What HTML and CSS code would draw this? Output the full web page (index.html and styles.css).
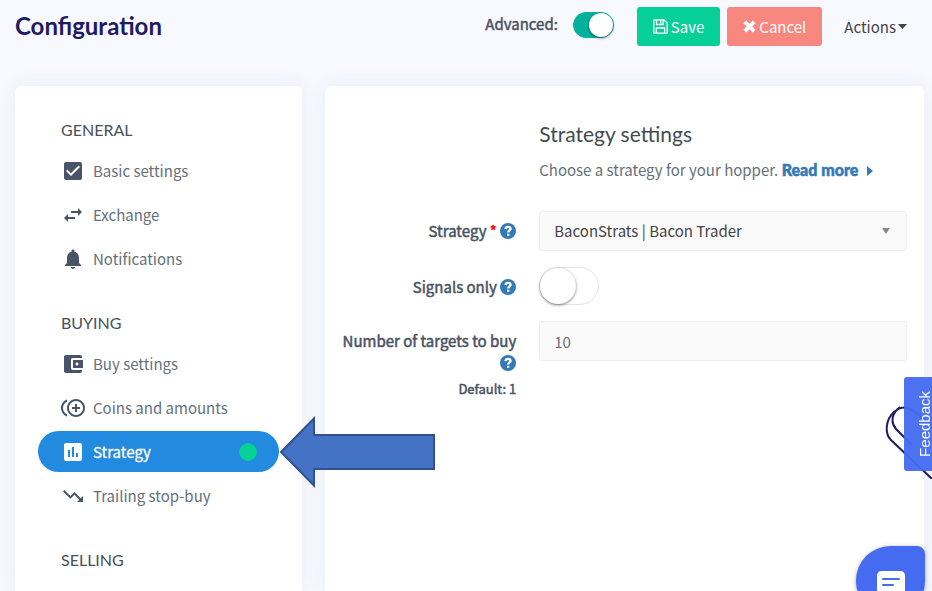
FILE: index.html
```html
<!DOCTYPE html>
<html lang="en">
<head>
<meta charset="utf-8">
<meta name="viewport" content="width=device-width, initial-scale=1">
<title>Configuration</title>
<link rel="stylesheet" href="styles.css">
</head>
<body>
<div class="page">
  <header class="topbar">
    <h1 class="title">Configuration</h1>
    <div class="actions">
      <label class="advanced" for="advanced">Advanced:</label>
      <input class="switch switch-small" type="checkbox" id="advanced" checked>
      <button class="btn btn-save" type="button">
        <svg width="15" height="15" viewBox="0 0 15 15" fill="none" stroke="currentColor" stroke-width="1.3"><path d="M.8 1.3Q.8.8 1.3.8H11L14.2 4V13.7Q14.2 14.2 13.7 14.2H1.3Q.8 14.2.8 13.7ZM3.5.8V5.5H10.2V.8M7.7 1.5V4.5M3.3 14V9H11.7V14"/></svg>Save</button>
      <button class="btn btn-cancel" type="button">
        <svg width="13" height="13" viewBox="0 0 13 13" fill="none" stroke="currentColor" stroke-width="4"><path d="M1.8 1.8 11.2 11.2M11.2 1.8 1.8 11.2"/></svg>Cancel</button>
      <button class="menu" type="button">Actions<svg width="9" height="5" viewBox="0 0 9 5" fill="currentColor"><path d="M0 0H9L4.5 5Z"/></svg></button>
    </div>
  </header>
  <div class="columns">
    <nav class="card sidebar">
      <section class="group">
        <h2 class="group-title">GENERAL</h2>
        <a class="item" href="#"><svg class="icon" viewBox="0 0 24 24"><path d="M19 3H5a2 2 0 0 0-2 2v14a2 2 0 0 0 2 2h14a2 2 0 0 0 2-2V5a2 2 0 0 0-2-2zm-9 14-5-5 1.41-1.41L10 14.17l7.59-7.59L19 8l-9 9z"/></svg>Basic settings</a>
        <a class="item" href="#"><svg class="icon" viewBox="0 0 24 24"><path d="M6.99 11 3 15l3.99 4v-3H14v-2H6.99v-3zM21 9l-3.99-4v3H10v2h7.01v3L21 9z"/></svg>Exchange</a>
        <a class="item" href="#"><svg class="icon" viewBox="0 0 24 24"><path d="M12 22c1.100 0 2-.9 2-2h-4c0 1.100.9 2 2 2zm6-6v-5c0-3.070-1.630-5.640-4.500-6.320V4c0-.83-.67-1.500-1.500-1.500s-1.500.67-1.500 1.500v.68C7.640 5.360 6 7.920 6 11v5l-2 2v1h16v-1l-2-2z"/></svg>Notifications</a>
      </section>
      <section class="group">
        <h2 class="group-title">BUYING</h2>
        <a class="item" href="#"><svg class="icon" viewBox="0 0 24 24"><path d="M21 18v1c0 1.100-.9 2-2 2H5c-1.110 0-2-.9-2-2V5c0-1.100.89-2 2-2h14c1.100 0 2 .9 2 2v1h-9c-1.110 0-2 .9-2 2v8c0 1.100.89 2 2 2h9zm-9-2h10V8H12v8zm4-2.500c-.83 0-1.500-.67-1.500-1.500s.67-1.500 1.500-1.500 1.500.67 1.500 1.500-.67 1.500-1.500 1.500z"/></svg>Buy settings</a>
        <a class="item" href="#"><svg class="icon" viewBox="0 0 24 24"><path d="M16 8h-2v3h-3v2h3v3h2v-3h3v-2h-3V8zM2 12c0-2.790 1.640-5.200 4.010-6.320V3.520C2.520 4.760 0 8.090 0 12s2.520 7.240 5.990 8.480v-2.160C3.640 17.200 2 14.790 2 12zm13-9c-4.960 0-9 4.040-9 9s4.040 9 9 9 9-4.040 9-9-4.040-9-9-9zm0 16c-3.860 0-7-3.140-7-7s3.140-7 7-7 7 3.140 7 7-3.140 7-7 7z"/></svg>Coins and amounts</a>
        <a class="item item-active" href="#" aria-current="page"><svg class="icon" viewBox="0 0 24 24"><path d="M19 3H5a2 2 0 0 0-2 2v14a2 2 0 0 0 2 2h14a2 2 0 0 0 2-2V5a2 2 0 0 0-2-2zM9 17H7v-7h2v7zm4 0h-2V7h2v10zm4 0h-2v-4h2v4z"/></svg>Strategy<span class="dot"></span></a>
        <a class="item" href="#"><svg class="icon" viewBox="0 0 24 24"><path d="m16 18 2.290-2.290-4.880-4.880-4 4L2 7.410 3.410 6l6 6 4-4 6.300 6.290L22 12v6z"/></svg>Trailing stop-buy</a>
      </section>
      <section class="group">
        <h2 class="group-title">SELLING</h2>
      </section>
    </nav>
    <main class="card main">
      <form class="form">
        <div class="intro">
          <h2 class="form-title">Strategy settings</h2>
          <p class="lead">Choose a strategy for your hopper. <a class="more" href="#">Read more<svg width="6" height="10" viewBox="0 0 6 10" fill="currentColor"><path d="M0 0 6 5 0 10Z"/></svg></a></p>
        </div>
        <div class="label"><label for="strategy">Strategy <span class="required">*</span></label> <svg class="help" viewBox="0 0 16 16"><circle cx="8" cy="8" r="8" fill="currentColor"/><path d="M5.500 6.200C5.700 4.500 6.800 3.900 8 3.900c1.500 0 2.500.8 2.500 2 0 1.500-2.300 1.600-2.300 3.500M8.200 10.800v2" fill="none" stroke="#fff" stroke-width="2.4"/></svg></div>
        <select class="field select" id="strategy"><option>BaconStrats | Bacon Trader</option></select>
        <div class="label"><label for="signals">Signals only</label> <svg class="help" viewBox="0 0 16 16"><circle cx="8" cy="8" r="8" fill="currentColor"/><path d="M5.500 6.200C5.700 4.500 6.800 3.900 8 3.900c1.500 0 2.500.8 2.500 2 0 1.500-2.300 1.600-2.300 3.500M8.200 10.800v2" fill="none" stroke="#fff" stroke-width="2.4"/></svg></div>
        <input class="switch switch-large" type="checkbox" id="signals">
        <div class="label"><label for="targets">Number of targets to buy</label> <svg class="help" viewBox="0 0 16 16"><circle cx="8" cy="8" r="8" fill="currentColor"/><path d="M5.500 6.200C5.700 4.500 6.800 3.900 8 3.900c1.500 0 2.500.8 2.500 2 0 1.500-2.300 1.600-2.300 3.500M8.200 10.800v2" fill="none" stroke="#fff" stroke-width="2.4"/></svg><small class="default">Default: 1</small></div>
        <input class="field" type="text" id="targets" value="10">
      </form>
    </main>
  </div>
</div>
<svg class="pointer" width="156" height="72" viewBox="0 0 156 72"><path d="M2 36 35 2.500V19H155V53H35V69.500Z" fill="#4472c4" stroke="#2f528f" stroke-width="2"/></svg>
<svg class="deco" width="50" height="76" viewBox="0 0 50 76" fill="none" stroke="#1f1b63" stroke-width="2"><path d="M50 76 9 37C2 30 4 16 12 9 18 4 24 3 30 7L50 22M30 42 14 26C8 19 10 10 18 4"/></svg>
<button class="feedback" type="button">Feedback</button>
<button class="chat" type="button" aria-label="Chat"><svg width="28" height="28" viewBox="0 0 28 28"><path d="M5 0H23Q28 0 28 5V28L21 23H5Q0 23 0 18V5Q0 0 5 0Z" fill="#fff"/><path d="M6 8H22M6 14H16" stroke="#456cf0" stroke-width="2" stroke-linecap="round"/></svg></button>
</body>
</html>
```
FILE: styles.css
```css
* { box-sizing: border-box; }
body {
  margin: 0;
  background: #f8f9ff;
  color: #495363;
  font: 15px/22px "Noto Sans CJK JP", "Noto Sans", sans-serif;
}
h1, h2, p { margin: 0; }
a { text-decoration: none; }
button { border: 0; font: inherit; cursor: pointer; }
.page { display: flex; flex-direction: column; min-height: 100vh; padding: 0 8px 0 15px; }
.topbar { display: flex; justify-content: space-between; height: 86px; padding-top: 7px; }
.title { font: 700 24px/38px Lato, sans-serif; color: #1f1b63; }
.actions { display: flex; align-items: flex-start; }
.advanced { -webkit-text-stroke: 0.5px; line-height: 34px; margin-right: 15px; }
.switch { appearance: none; margin: 0; border: 1px solid #e4e4e4; border-radius: 20px; background: #fff; display: flex; cursor: pointer; }
.switch::before { content: ""; height: 100%; aspect-ratio: 1; border-radius: 50%; background: #fff; box-shadow: 0 1px 3px rgba(0, 0, 0, .5); }
.switch:checked { justify-content: flex-end; background: #00b19d; border-color: #00b19d; }
.switch-small { width: 41px; height: 26px; margin: 5px 23px 0 0; }
.switch-large { width: 60px; height: 38px; }
.btn { display: flex; align-items: center; justify-content: center; gap: 3px; height: 39px; padding: 0 16px; margin-right: 7px; border-radius: 3px; color: #fff; }
.btn-save { background: #06cf98; }
.btn-cancel { background: #f8877f; }
.menu { display: flex; align-items: center; gap: 2px; height: 39px; margin: 0 17px 0 15px; padding: 0; background: none; color: #444; }
.columns { flex: 1; display: grid; grid-template-columns: minmax(0, 12fr) minmax(0, 25fr); gap: 23px; }
.card { background: #fff; border-radius: 6px 6px 0 0; box-shadow: 0 0 20px rgba(60, 70, 140, .08); }
.sidebar { padding: 34px 23px 0; }
.group { margin-bottom: 34px; }
.group:last-child { margin-bottom: 0; }
.group-title { margin: 0 23px 10px; font: 400 16px/20px Lato, sans-serif; color: #495057; }
.item { display: flex; align-items: center; height: 41px; margin-bottom: 3px; padding: 0 22px 0 23px; border-radius: 21px; color: #66707a; }
.icon { width: 24px; height: 24px; margin-right: 8px; fill: currentColor; color: #495468; }
.item-active { background: #228be0; color: #fff; -webkit-text-stroke: 0.3px; }
.item-active .icon { color: #fff; }
.dot { width: 18px; height: 18px; margin-left: auto; border-radius: 50%; background: #06cf98; }
.main { padding: 36px 17px 0 15px; }
.form { display: grid; grid-template-columns: minmax(0, 11fr) minmax(0, 23fr); column-gap: 23px; row-gap: 16px; }
.intro { grid-column: 2; margin-bottom: 14px; }
.form-title { font: 400 21px/24px Lato, sans-serif; color: #444b54; }
.lead { margin-top: 13px; color: #66707a; }
.more { font: 900 16px/22px Lato, sans-serif; color: #337ab7; -webkit-text-stroke: 0.5px; }
.more svg { margin-left: 9px; }
.label { padding-top: 9px; text-align: right; }
.label label, .default { -webkit-text-stroke: 0.5px; }
.required { color: #f00; }
.help { width: 16px; height: 16px; color: #337ab7; vertical-align: -2px; }
.default { display: block; margin-top: 5px; font-size: 13px; line-height: 20px; }
.field { width: 100%; height: 40px; padding: 0 14px; border: 1px solid #eee; border-radius: 3px; background: #fafafa; color: #66707a; font: inherit; }
.select { appearance: none; color: #444; background: #fafafa url("data:image/svg+xml,%3Csvg xmlns='http://www.w3.org/2000/svg' width='8' height='6'%3E%3Cpath d='M0 0H8L4 6Z' fill='%23888'/%3E%3C/svg%3E") no-repeat right 16px center; }
.pointer { position: absolute; left: 279px; top: 416px; }
.deco { position: fixed; right: 0; top: 403px; }
.feedback { position: fixed; right: -12px; top: 377px; width: 40px; height: 94px; padding: 0 0 0 2px; border-radius: 3px 0 0 3px; background: rgba(69, 108, 240, .96); color: #fff; font: 15px/36px "Liberation Sans", sans-serif; writing-mode: sideways-lr; text-align: center; }
.chat { display: flex; justify-content: center; align-items: flex-start; position: fixed; right: 7px; bottom: -25px; width: 69px; height: 70px; padding: 25px 0 0; border-radius: 35px 8px 35px 35px; background: #456cf0; box-shadow: 0 1px 5px rgba(0, 0, 0, .3); }
```
